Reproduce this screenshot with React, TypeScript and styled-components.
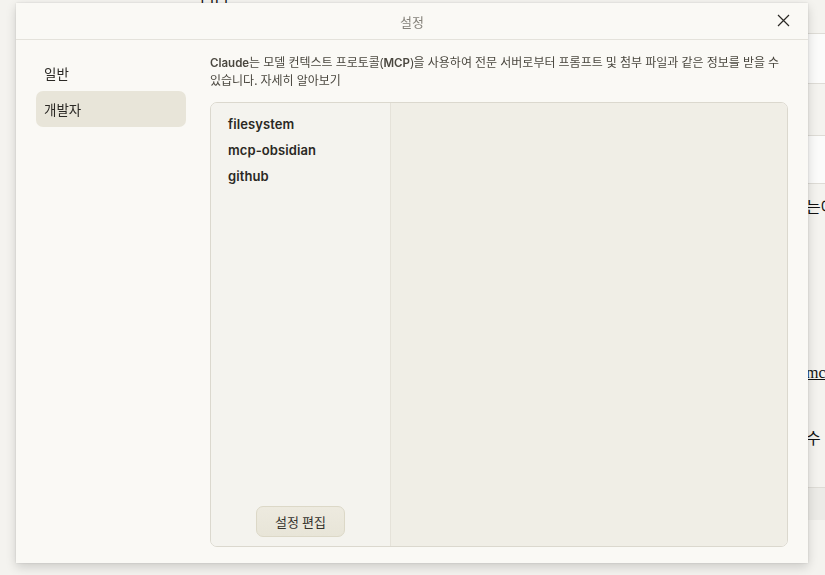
import React from "react";
import styled, { createGlobalStyle } from "styled-components";

const GlobalStyle = createGlobalStyle`
  html, body { margin: 0; padding: 0; }
  body {
    background: #f2f1ed;
    font-family: "Noto Sans", "Noto Sans CJK KR", sans-serif;
    width: 825px;
    height: 575px;
    overflow: hidden;
  }
`;

/* ---------- background page (mostly hidden behind the dialog) ---------- */
const BgPage = styled.div`
  width: 825px;
  height: 575px;
  background: #f4f3ef;
  font-family: "Liberation Serif", "Noto Sans CJK KR", serif;
  color: #111;
  display: flex;
  flex-direction: column;
`;

const BgTop = styled.div`
  height: 33px;
  position: relative;
  font-size: 16px;
  line-height: 10px;
  padding-left: 200px;
  overflow: hidden;
`;

const BgField = styled.div<{ $h: number; $mt: number }>`
  height: ${(p) => p.$h}px;
  margin-top: ${(p) => p.$mt}px;
  margin-left: 780px;
  background: #fbfbfa;
  border-top: 1px solid #dedcd6;
  border-bottom: 1px solid #dedcd6;
`;

const BgText = styled.div<{ $mt: number }>`
  margin-top: ${(p) => p.$mt}px;
  padding-left: 806px;
  font-size: 16px;
  line-height: 20px;
  white-space: nowrap;
  overflow: hidden;
`;

const BgLink = styled.span`
  text-decoration: underline;
`;

const BgFooter = styled.div`
  margin-top: 38px;
  margin-left: 780px;
  height: 32px;
  background: #ecebe7;
  border-top: 1px solid #dedcd6;
`;

/* ---------- dialog ---------- */
const Overlay = styled.div`
  position: fixed;
  inset: 0;
`;

const Dialog = styled.div`
  position: absolute;
  left: 16px;
  top: 3px;
  width: 792px;
  height: 560px;
  background: #faf9f5;
  box-shadow: 0 4px 10px rgba(0, 0, 0, 0.16), 0 0 2px rgba(0, 0, 0, 0.12);
  display: flex;
  flex-direction: column;
  color: #3d3a33;
`;

const Header = styled.div`
  height: 36px;
  flex: 0 0 36px;
  border-bottom: 1px solid #e4e2db;
  display: flex;
  align-items: center;
  justify-content: center;
  position: relative;
`;

const Title = styled.div`
  font-size: 13px;
  color: #85827b;
`;

const CloseButton = styled.button`
  position: absolute;
  right: 17px;
  top: 9px;
  width: 16px;
  height: 16px;
  padding: 0;
  border: none;
  background: transparent;
  display: flex;
  align-items: center;
  justify-content: center;
  cursor: pointer;
`;

const Body = styled.div`
  flex: 1;
  display: flex;
  gap: 24px;
  padding: 14px 20px 16px 20px;
  min-height: 0;
`;

const Sidebar = styled.nav`
  width: 150px;
  flex: 0 0 150px;
  display: flex;
  flex-direction: column;
  padding-top: 1px;
`;

const NavItem = styled.div<{ $active?: boolean }>`
  height: 36px;
  display: flex;
  align-items: center;
  padding-left: 8px;
  border-radius: 7px;
  font-size: 13.5px;
  color: #2b2925;
  background: ${(p) => (p.$active ? "#e8e5d9" : "transparent")};
`;

const Content = styled.div`
  flex: 1;
  display: flex;
  flex-direction: column;
  min-width: 0;
`;

const Description = styled.p`
  margin: 0;
  font-size: 12px;
  line-height: 17px;
  color: #4a473f;
`;

const Strong = styled.span`
  font-family: "Inter", "Noto Sans CJK KR", sans-serif;
  font-weight: 600;
  font-size: 11.5px;
`;

const Panel = styled.div`
  margin-top: 13px;
  flex: 1;
  border: 1px solid #dbd8ce;
  border-radius: 7px;
  display: flex;
  overflow: hidden;
`;

const ServerColumn = styled.div`
  width: 179px;
  flex: 0 0 179px;
  background: #f4f3ee;
  border-right: 1px solid #e5e2d9;
  display: flex;
  flex-direction: column;
  padding: 8px 0 9px 0;
`;

const ServerList = styled.ul`
  list-style: none;
  margin: 0;
  padding: 0;
  flex: 1;
`;

const ServerItem = styled.li`
  height: 26px;
  display: flex;
  align-items: center;
  padding-left: 17px;
  font-family: "Inter", "Noto Sans", sans-serif;
  font-weight: 600;
  font-size: 13px;
  color: #2a2823;
  letter-spacing: 0.1px;
`;

const EditButton = styled.button`
  align-self: center;
  width: 89px;
  height: 31px;
  border: 1px solid #dcd8c7;
  border-radius: 7px;
  background: linear-gradient(#edeadf, #e8e5d8);
  font-family: "Noto Sans CJK KR", sans-serif;
  font-size: 13px;
  color: #35332d;
  cursor: pointer;
`;

const DetailColumn = styled.div`
  flex: 1;
  background: #f0eee6;
`;

export default function App() {
  const servers = ["filesystem", "mcp-obsidian", "github"];
  return (
    <>
      <GlobalStyle />
      <BgPage>
        <BgTop>니다</BgTop>
        <BgField $h={49} $mt={0} />
        <BgField $h={47} $mt={51} />
        <BgText $mt={14}>는에</BgText>
        <BgText $mt={145}>
          <BgLink>mc</BgLink>
        </BgText>
        <BgText $mt={46}>수 있</BgText>
        <BgFooter />
      </BgPage>
      <Overlay>
        <Dialog>
          <Header>
            <Title>설정</Title>
            <CloseButton aria-label="닫기">
              <svg width="13" height="13" viewBox="0 0 13 13">
                <path d="M1 1 L12 12 M12 1 L1 12" stroke="#2b2925" strokeWidth="1.2" fill="none" />
              </svg>
            </CloseButton>
          </Header>
          <Body>
            <Sidebar>
              <NavItem>일반</NavItem>
              <NavItem $active>개발자</NavItem>
            </Sidebar>
            <Content>
              <Description>
                <Strong>Claude</Strong>는 모델 컨텍스트 프로토콜(<Strong>MCP</Strong>)을 사용하여 전문 서버로부터
                프롬프트 및 첨부 파일과 같은 정보를 받을 수 있습니다. 자세히 알아보기
              </Description>
              <Panel>
                <ServerColumn>
                  <ServerList>
                    {servers.map((s) => (
                      <ServerItem key={s}>{s}</ServerItem>
                    ))}
                  </ServerList>
                  <EditButton>설정 편집</EditButton>
                </ServerColumn>
                <DetailColumn />
              </Panel>
            </Content>
          </Body>
        </Dialog>
      </Overlay>
    </>
  );
}
